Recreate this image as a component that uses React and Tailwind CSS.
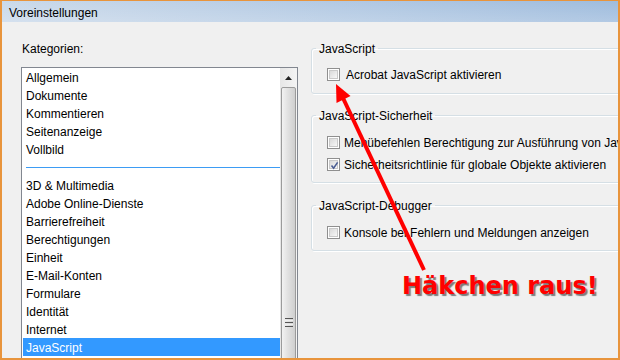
import React from "react";

const CATEGORIES_TOP = ["Allgemein", "Dokumente", "Kommentieren", "Seitenanzeige", "Vollbild"];
const CATEGORIES = [
  "3D & Multimedia",
  "Adobe Online-Dienste",
  "Barrierefreiheit",
  "Berechtigungen",
  "Einheit",
  "E-Mail-Konten",
  "Formulare",
  "Identität",
  "Internet",
  "JavaScript",
];

const Checkbox = ({ checked }) => (
  <span className="flex h-[13px] w-[13px] shrink-0 items-center justify-center border border-[#8f8f8f] bg-white p-px">
    <span className="relative flex h-full w-full items-center justify-center border border-[#c9c9c9] bg-[linear-gradient(135deg,#d9d9d9,#f7f7f7)]">
      {checked && (
        <svg width="11" height="11" viewBox="0 0 11 11" className="absolute -left-px -top-px">
          <path d="M2.5 5.5 L4.6 8.2 L8.6 2.4" fill="none" stroke="#4a5d93" strokeWidth="1.6" />
        </svg>
      )}
    </span>
  </span>
);

const Option = ({ label, checked, gap = "gap-[4px]" }) => (
  <div className={`flex h-4 items-center whitespace-nowrap pl-[15px] ${gap}`}>
    <Checkbox checked={checked} />
    <span className="mt-[2px]">{label}</span>
  </div>
);

const Group = ({ title, children, className }) => (
  <fieldset
    className={`rounded-[3px] border border-[#d5dfe5] shadow-[inset_1px_1px_0_#ffffff,1px_1px_0_#ffffff] ${className}`}
  >
    <legend className="ml-[4px] px-[3px] pt-[2px] leading-4">{title}</legend>
    {children}
  </fieldset>
);

const ListItem = ({ label, selected }) => (
  <div
    className={`ml-px h-[18px] pl-[3px] pt-[2px] leading-[16px] ${
      selected ? "bg-[#3399ff] text-white" : "text-black"
    }`}
  >
    {label}
  </div>
);

const Scrollbar = () => (
  <div className="flex w-[17px] flex-col bg-[linear-gradient(to_right,#e6e6e6,#f4f4f4)]">
    <div className="flex h-[19px] items-center justify-center">
      <svg width="7" height="4" viewBox="0 0 7 4">
        <path d="M0 4 L3.5 0 L7 4 Z" fill="#222" />
      </svg>
    </div>
    <div className="mx-px flex flex-1 flex-col items-center rounded-t-[2px] border border-[#9b9b9b] bg-[linear-gradient(to_right,#f2f2f2,#e1e1e1_45%,#cfcfcf)]">
      <div className="mt-[230px] flex flex-col gap-px">
        <span className="h-px w-[8px] bg-[#555]" />
        <span className="h-px w-[8px] bg-[#eee]" />
        <span className="h-px w-[8px] bg-[#555]" />
        <span className="h-px w-[8px] bg-[#eee]" />
        <span className="h-px w-[8px] bg-[#555]" />
      </div>
    </div>
  </div>
);

export default function App() {
  return (
    <div className="relative h-[360px] w-[620px] overflow-hidden border-x-2 border-b-2 border-t border-[#e8943c] bg-[#f0f0f0] font-['Liberation_Sans',Arial,sans-serif] text-[12px] text-black">
      <div className="flex h-[21px] items-center bg-[linear-gradient(to_bottom,rgba(255,255,255,0)_0%,rgba(255,255,255,0.2)_100%),linear-gradient(to_right,#cad9ea,#9fbcdd)] pl-[7px] pt-[2px]">
        Voreinstellungen
      </div>

      <div className="flex">
        <div className="flex w-[296px] shrink-0 flex-col pl-[19px] pt-[19px]">
          <div className="mb-[10px] h-4 pl-px leading-4">Kategorien:</div>
          <div className="flex h-[300px] border border-[#828790] bg-white">
            <div className="flex-1">
              {CATEGORIES_TOP.map((c) => (
                <ListItem key={c} label={c} />
              ))}
              <div className="flex h-[18px] items-center pl-[4px]">
                <div className="h-px w-full bg-[#3d9cf4]" />
              </div>
              {CATEGORIES.map((c) => (
                <ListItem key={c} label={c} selected={c === "JavaScript"} />
              ))}
            </div>
            <Scrollbar />
          </div>
        </div>

        <div className="ml-[13px] flex w-[330px] shrink-0 flex-col pt-[17px]">
          <Group title="JavaScript" className="pb-[11px] pt-[9px]">
            <Option label="Acrobat JavaScript aktivieren" gap="gap-[6px]" />
          </Group>
          <Group title="JavaScript-Sicherheit" className="mt-[12px] flex flex-col gap-[6px] pb-[10px] pt-[10px]">
            <Option label="Menübefehlen Berechtigung zur Ausführung von JavaScript erteilen" />
            <Option label="Sicherheitsrichtlinie für globale Objekte aktivieren" checked />
          </Group>
          <Group title="JavaScript-Debugger" className="mt-[13px] pb-[10px] pt-[10px]">
            <Option label="Konsole bei Fehlern und Meldungen anzeigen" />
          </Group>
        </div>
      </div>

      <svg
        className="pointer-events-none absolute -left-[2px] -top-px"
        width="620"
        height="360"
        viewBox="0 0 620 360"
      >
        <line x1="424" y1="270" x2="343" y2="98" stroke="#ff0000" strokeWidth="4" />
        <polygon points="336,84 350.5,96 336.5,103" fill="#ff0000" />
      </svg>

      <div className="absolute left-[400px] top-[273px] whitespace-nowrap font-['DejaVu_Sans',Verdana,sans-serif] text-[24px] font-bold leading-none text-[#ff0000] [text-shadow:2px_2px_1px_#7c7c7c]">
        Häkchen raus!
      </div>
    </div>
  );
}
